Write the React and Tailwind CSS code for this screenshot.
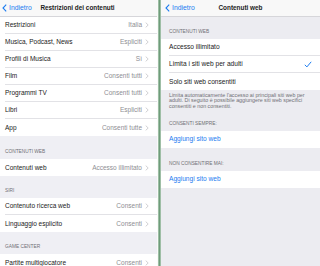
import React from "react";

const leftRows = [
  ["Restrizioni", "Italia"],
  ["Musica, Podcast, News", "Espliciti"],
  ["Profili di Musica", "Sì"],
  ["Film", "Consenti tutti"],
  ["Programmi TV", "Consenti tutti"],
  ["Libri", "Espliciti"],
  ["App", "Consenti tutte"],
];

const Chevron = () => (
  <svg width="4" height="6" viewBox="0 0 4 6" className="ml-[3px] shrink-0">
    <path d="M0.7 0.6 L3.2 3 L0.7 5.4" fill="none" stroke="#c4c4c8" strokeWidth="0.8" />
  </svg>
);

const BackChevron = () => (
  <svg width="5" height="8" viewBox="0 0 5 8" className="shrink-0">
    <path d="M4.2 0.6 L1 4 L4.2 7.4" fill="none" stroke="#1c7cf0" strokeWidth="1.1" />
  </svg>
);

const NavBar = ({ title, pad }) => (
  <div className={`grid grid-cols-[1fr_auto_1fr] items-center h-[17px] bg-[#f8f8f8] border-b border-[#d6d6da] ${pad}`}>
    <div className="flex items-center gap-[2px] text-[#1c7cf0] text-[6.8px]">
      <BackChevron />
      <span>Indietro</span>
    </div>
    <div className="font-semibold text-[6.4px] text-[#222]">{title}</div>
    <div />
  </div>
);

const SectionHeader = ({ children, h, pl }) => (
  <div className={`flex items-end ${h} ${pl} pb-[4px] text-[4.8px] leading-[6px] text-[#707075] uppercase`}>
    {children}
  </div>
);

const Row = ({ label, value, last }) => (
  <div className="bg-white h-[17px] pl-[5px]">
    <div className={`flex items-center justify-between h-full pr-[8px] ${last ? "" : "border-b border-[#e2e2e6]"}`}>
      <span className="text-[#1a1a1a]">{label}</span>
      <span className="flex items-center text-[#8e8e93]">
        {value}
        <Chevron />
      </span>
    </div>
  </div>
);

const LeftPanel = () => (
  <div className="w-[157px] shrink-0 bg-[#efeff4] text-[6.5px]">
    <NavBar title="Restrizioni dei contenuti" pad="pl-[2px] pr-[4px]" />
    <div>
      {leftRows.map(([l, v], i) => (
        <Row key={l} label={l} value={v} last={i === leftRows.length - 1} />
      ))}
    </div>
    <SectionHeader h="h-[23px]" pl="pl-[5px]">Contenuti web</SectionHeader>
    <Row label="Contenuti web" value="Accesso illimitato" last />
    <SectionHeader h="h-[22px]" pl="pl-[5px]">Siri</SectionHeader>
    <Row label="Contenuto ricerca web" value="Consenti" />
    <Row label="Linguaggio esplicito" value="Consenti" last />
    <SectionHeader h="h-[22px]" pl="pl-[5px]">Game Center</SectionHeader>
    <Row label="Partite multigiocatore" value="Consenti" last />
  </div>
);

const RightRow = ({ children, last, check, blue }) => (
  <div className="bg-white h-[17px] pl-[8px]">
    <div className={`flex items-center justify-between h-full pr-[8px] ${last ? "" : "border-b border-[#e2e2e6]"}`}>
      <span className={blue ? "text-[#1c7cf0]" : "text-[#1a1a1a]"}>{children}</span>
      {check && (
        <svg width="8" height="7" viewBox="0 0 8 7">
          <path d="M0.8 3.8 L2.9 5.9 L7.2 0.8" fill="none" stroke="#1c7cf0" strokeWidth="1" />
        </svg>
      )}
    </div>
  </div>
);

const RightPanel = () => (
  <div className="flex-1 bg-[#ececf1] text-[6.6px]">
    <NavBar title="Contenuti web" pad="pl-[4px] pr-[4px]" />
    <SectionHeader h="h-[22px]" pl="pl-[8px]">Contenuti web</SectionHeader>
    <RightRow>Accesso illimitato</RightRow>
    <RightRow check>Limita i siti web per adulti</RightRow>
    <RightRow last>Solo siti web consentiti</RightRow>
    <p className="pl-[8px] pr-[10px] pt-[2.5px] text-[5.3px] leading-[5.8px] text-[#707075]">
      Limita automaticamente l'accesso ai principali siti web per adulti. Di seguito è possibile aggiungere siti web specifici consentiti e non consentiti.
    </p>
    <SectionHeader h="h-[21px]" pl="pl-[8px]">Consenti sempre:</SectionHeader>
    <RightRow last blue>Aggiungi sito web</RightRow>
    <SectionHeader h="h-[23px]" pl="pl-[8px]">Non consentire mai:</SectionHeader>
    <RightRow last blue>Aggiungi sito web</RightRow>
  </div>
);

export default function App() {
  return (
    <div
      className="flex w-[320px] h-[266px] overflow-hidden bg-white"
      style={{ fontFamily: '"Liberation Sans", Arial, sans-serif' }}
    >
      <LeftPanel />
      <div className="w-[1px] shrink-0 bg-[#fafafa]" />
      <div className="w-[3px] shrink-0 bg-gradient-to-r from-[#b3cfb9] via-[#6f9c7a] to-[#b7d0bd]" />
      <RightPanel />
    </div>
  );
}
